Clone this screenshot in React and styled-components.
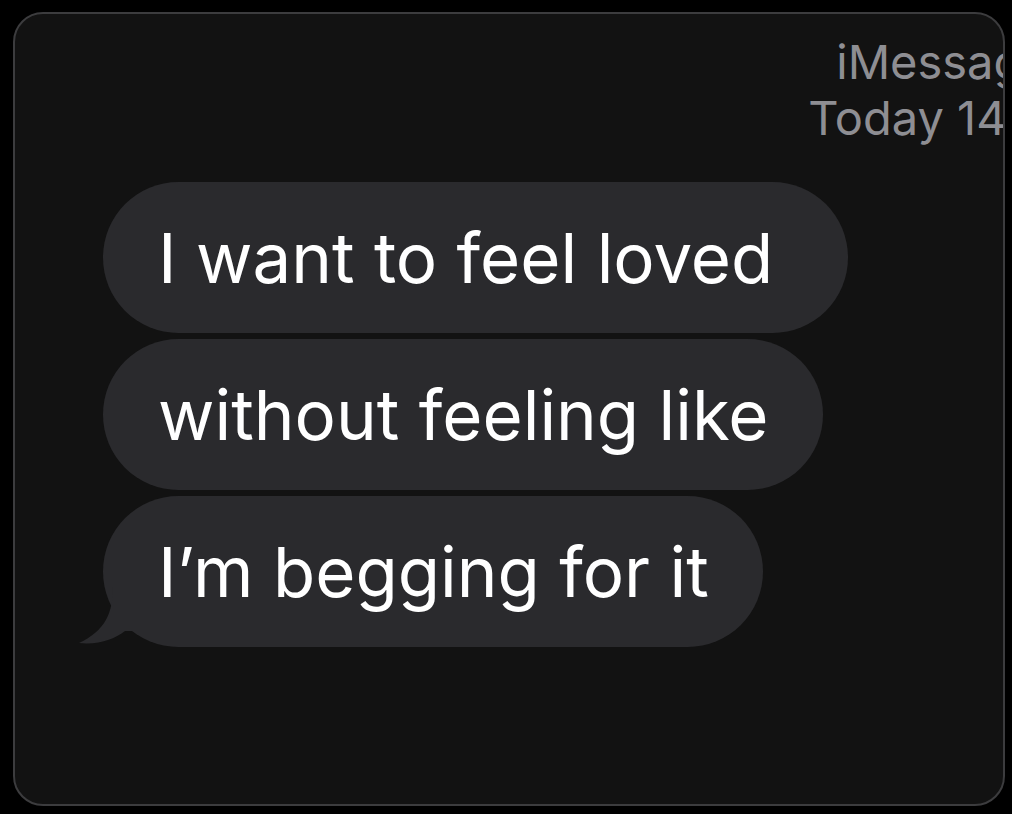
import styled, { createGlobalStyle } from 'styled-components'

const GlobalStyle = createGlobalStyle`
  html, body {
    margin: 0;
    padding: 0;
    background: #000;
  }
  body {
    font-family: Inter, 'Liberation Sans', Arial, sans-serif;
  }
`

const Page = styled.div`
  width: 1012px;
  height: 814px;
  box-sizing: border-box;
  padding: 12px 7px 8px 13px;
  background: #000;
`

const Card = styled.div`
  height: 100%;
  box-sizing: border-box;
  background: #121212;
  border: 2px solid #3c3c3e;
  border-radius: 30px;
  overflow: hidden;
  display: flex;
  flex-direction: column;
`

const Header = styled.div`
  display: flex;
  justify-content: flex-end;
  margin-right: -80px;
  padding-top: 20px;
`

const Meta = styled.div`
  width: 280px;
  text-align: center;
  color: #8e8e93;
  font-size: 47px;
  line-height: 56px;
  white-space: nowrap;
`

const Thread = styled.div`
  display: flex;
  flex-direction: column;
  align-items: flex-start;
  gap: 6px;
  padding: 36px 0 0 88px;
`

const Bubble = styled.div`
  position: relative;
  height: 151px;
  box-sizing: border-box;
  padding: 0 ${p => p.$right || 54}px 0 55px;
  display: flex;
  align-items: center;
  background: #2a2a2d;
  border-radius: 76px;
  color: #fff;
  font-size: 69px;
  white-space: nowrap;
`

const Tail = styled.svg`
  position: absolute;
  left: -24px;
  bottom: 0;
  width: 60px;
  height: 60px;
`

const messages = [
  { text: 'I want to feel loved', right: 75 },
  { text: 'without feeling like' },
  { text: 'I’m begging for it' },
]

export default function App() {
  return (
    <>
      <GlobalStyle />
      <Page>
        <Card>
          <Header>
            <Meta>
              iMessage
              <br />
              Today 14:32
            </Meta>
          </Header>
          <Thread>
            {messages.map((m, i) => (
              <Bubble key={i} $right={m.right}>
                {i === messages.length - 1 && (
                  <Tail viewBox="0 0 60 60">
                    <path d="M34 0 C34 26 26 44 0 56 C20 58 36 52 46 44 L60 44 L60 0 Z" fill="#2a2a2d" />
                  </Tail>
                )}
                {m.text}
              </Bubble>
            ))}
          </Thread>
        </Card>
      </Page>
    </>
  )
}
